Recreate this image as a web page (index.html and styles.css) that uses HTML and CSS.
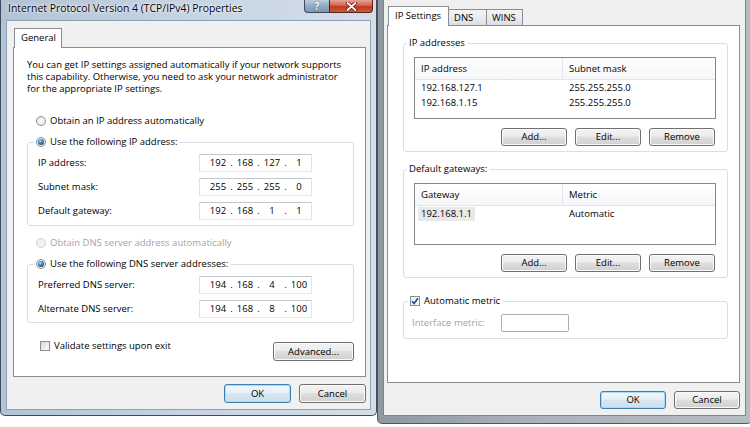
FILE: index.html
```html
<!DOCTYPE html>
<html>
<head>
<meta charset="utf-8">
<title>TCP/IPv4 Properties</title>
<link rel="stylesheet" href="styles.css">
</head>
<body>
<div class="win win-left">
  <div class="titlebar">
    <span class="title">Internet Protocol Version 4 (TCP/IPv4) Properties</span>
    <div class="caps">
      <span class="cap cap-help">?</span>
      <span class="cap cap-close"><svg width="13" height="9" viewBox="0 0 13 9"><path d="M2.5 1 L10.5 8 M10.5 1 L2.5 8" stroke="#5a1a10" stroke-width="3.4" stroke-linecap="round"/><path d="M2.5 1 L10.5 8 M10.5 1 L2.5 8" stroke="#fff" stroke-width="1.8" stroke-linecap="round"/></svg></span>
    </div>
  </div>
  <div class="client client-left">
    <div class="tabs">
      <span class="tab active tab-general">General</span>
    </div>
    <div class="panel panel-left">
      <p class="intro">You can get IP settings assigned automatically if your network supports<br>this capability. Otherwise, you need to ask your network administrator<br>for the appropriate IP settings.</p>
      <div class="opt opt-ip"><span class="radio"></span><span>Obtain an IP address automatically</span></div>
      <fieldset class="group group-l group-ip">
        <legend><span class="leg"><span class="radio checked"></span><span>Use the following IP address:</span></span></legend>
        <div class="field"><span>IP address:</span><span class="ipbox"><span class="seg">192</span><span class="dot">.</span><span class="seg">168</span><span class="dot">.</span><span class="seg">127</span><span class="dot">.</span><span class="seg">1</span></span></div>
        <div class="field"><span>Subnet mask:</span><span class="ipbox"><span class="seg">255</span><span class="dot">.</span><span class="seg">255</span><span class="dot">.</span><span class="seg">255</span><span class="dot">.</span><span class="seg">0</span></span></div>
        <div class="field"><span>Default gateway:</span><span class="ipbox"><span class="seg">192</span><span class="dot">.</span><span class="seg">168</span><span class="dot">.</span><span class="seg">1</span><span class="dot">.</span><span class="seg">1</span></span></div>
      </fieldset>
      <div class="opt opt-dns disabled"><span class="radio off"></span><span>Obtain DNS server address automatically</span></div>
      <fieldset class="group group-l group-dns">
        <legend><span class="leg"><span class="radio checked"></span><span>Use the following DNS server addresses:</span></span></legend>
        <div class="field"><span>Preferred DNS server:</span><span class="ipbox"><span class="seg">194</span><span class="dot">.</span><span class="seg">168</span><span class="dot">.</span><span class="seg">4</span><span class="dot">.</span><span class="seg">100</span></span></div>
        <div class="field"><span>Alternate DNS server:</span><span class="ipbox"><span class="seg">194</span><span class="dot">.</span><span class="seg">168</span><span class="dot">.</span><span class="seg">8</span><span class="dot">.</span><span class="seg">100</span></span></div>
      </fieldset>
      <div class="validate-row">
        <span class="chk"><span class="checkbox"></span><span>Validate settings upon exit</span></span>
        <button class="btn btn-adv">Advanced...</button>
      </div>
    </div>
    <div class="footer footer-left">
      <button class="btn btn-foot btn-default">OK</button>
      <button class="btn btn-foot">Cancel</button>
    </div>
  </div>
</div>

<div class="win win-right">
  <div class="client client-right">
    <div class="tabs">
      <span class="tab active tab-ip">IP Settings</span>
      <span class="tab tab-dns">DNS</span>
      <span class="tab tab-wins">WINS</span>
    </div>
    <div class="panel panel-right">
      <fieldset class="group group-r group-addr">
        <legend>IP addresses</legend>
        <div class="list">
          <div class="list-head"><span class="col1">IP address</span><span class="col2">Subnet mask</span></div>
          <div class="list-row"><span class="col1">192.168.127.1</span><span class="col2">255.255.255.0</span></div>
          <div class="list-row"><span class="col1">192.168.1.15</span><span class="col2">255.255.255.0</span></div>
        </div>
        <div class="btn-row">
          <button class="btn btn-list">Add...</button>
          <button class="btn btn-list">Edit...</button>
          <button class="btn btn-list">Remove</button>
        </div>
      </fieldset>
      <fieldset class="group group-r group-gw">
        <legend>Default gateways:</legend>
        <div class="list">
          <div class="list-head"><span class="col1">Gateway</span><span class="col2">Metric</span></div>
          <div class="list-row"><span class="col1"><span class="sel">192.168.1.1</span></span><span class="col2">Automatic</span></div>
        </div>
        <div class="btn-row">
          <button class="btn btn-list">Add...</button>
          <button class="btn btn-list">Edit...</button>
          <button class="btn btn-list">Remove</button>
        </div>
      </fieldset>
      <fieldset class="group group-r group-metric">
        <legend><span class="leg"><span class="checkbox checked"><svg width="8" height="8" viewBox="0 0 8 8"><path d="M1 4.2 L3.1 6.5 L7 1.2" fill="none" stroke="#1c4f8a" stroke-width="1.6"/></svg></span><span>Automatic metric</span></span></legend>
        <div class="metric-row"><span class="disabled">Interface metric:</span><span class="textbox"></span></div>
      </fieldset>
    </div>
    <div class="footer footer-right">
      <button class="btn btn-foot2 btn-default">OK</button>
      <button class="btn btn-foot2">Cancel</button>
    </div>
  </div>
</div>
</body>
</html>
```

FILE: styles.css
```css
* { box-sizing: border-box; }
html, body { margin: 0; padding: 0; }
body {
  width: 750px;
  height: 427px;
  overflow: hidden;
  background: #fff;
  display: flex;
  align-items: flex-start;
  font-family: "Open Sans", "Noto Sans", sans-serif;
  font-size: 9.5px;
  line-height: 12px;
  color: #000;
}

/* windows */
.win { display: flex; flex-direction: column; flex: none; }
.win-left {
  width: 377px;
  height: 416px;
  padding: 0 5px 5px;
  border: 1px solid #3d4c5c;
  border-top: none;
  border-radius: 0 0 5px 5px;
  background: linear-gradient(90deg, #b2c3d5 0%, #c6d4e2 50%, #d3dee9 100%);
}
.win-right {
  width: 375px;
  height: 424px;
  padding: 0 5px 7px;
  border: 1px solid #4f5762;
  border-top: none;
  border-radius: 0 0 5px 5px;
  background: linear-gradient(90deg, #8f989f 0%, #aab1b8 40%, #b5bcc2 100%);
}

.titlebar { height: 20px; display: flex; align-items: flex-start; }
.title {
  margin: 2px 0 0 2px;
  font-size: 10.4px;
  line-height: 12px;
  color: #000;
  text-shadow: 0 0 4px #fff, 0 0 2px #fff;
}
.caps { margin-left: auto; margin-right: -2px; display: flex; height: 13px; }
.cap {
  display: flex;
  align-items: center;
  justify-content: center;
  height: 13px;
  border: 1px solid #3b4b5d;
  border-top: none;
}
.cap-help {
  width: 25px;
  border-right: none;
  border-radius: 0 0 0 4px;
  background: linear-gradient(#bccde0, #93aac3 50%, #7d95b0);
  color: #fff;
  font-weight: 700;
  font-size: 10px;
  text-shadow: 0 0 2px #3b4b5d;
}
.cap-close {
  width: 44px;
  border-color: #5b2017;
  border-radius: 0 0 4px 0;
  background: linear-gradient(#e6a597, #d3634c 45%, #bd3a22 55%, #cc5a40);
}

.client {
  flex: 1;
  display: flex;
  flex-direction: column;
  background: #f0f0f0;
  border: 1px solid #8ea2b7;
}
.client-left { padding: 7px 4px 0 6px; }
.client-right { border-top: none; border-color: #7d858d; padding: 6px 5px 0 3px; }

/* tabs */
.tabs { display: flex; align-items: flex-end; padding-left: 1px; }
.tab {
  height: 16px;
  padding: 0 5px;
  border: 1px solid #898c95;
  border-bottom: none;
  background: linear-gradient(#f4f4f4, #ebebeb 50%, #dddddd);
  display: flex;
  align-items: center;
  margin-right: -1px;
}
.tab.active {
  position: relative;
  z-index: 1;
  height: 20px;
  margin-bottom: -1px;
  background: #fff;
  padding-bottom: 2px;
}
.tab-general { width: 48px; height: 19px; padding-left: 6px; }
.tab-ip { width: 61px; padding-left: 6px; }
.tab-dns { width: 39px; }
.tab-wins { width: 37px; }

.panel { flex: none; background: #fff; border: 1px solid #898c95; }
.panel-left { height: 330px; padding: 11px 11px 0 13px; }
.panel-right { height: 358px; padding: 11px 11px 0 15px; }

.intro { margin: 0; }

.opt { display: flex; align-items: center; gap: 4px; padding-left: 9px; height: 12px; }
.opt-ip { margin-top: 20px; }
.opt-dns { margin-top: 11px; }
.disabled { color: #a3a3a3; }

/* group boxes */
.group {
  margin: 0;
  min-width: 0;
  border: 1px solid #d5dfe5;
  border-radius: 3px;
}
.group legend { padding: 0 3px 0 2px; line-height: 12px; }
.leg { display: flex; align-items: center; gap: 4px; }
.group-l { padding: 6px 0 5px 10px; }
.group-l legend { margin-left: -4px; }
.group-ip { margin-top: 9px; }
.group-dns { margin-top: 9px; padding-bottom: 4px; }

.field {
  display: grid;
  grid-template-columns: 161px 113px;
  align-items: center;
  height: 18px;
}
.field + .field { margin-top: 6px; }

.ipbox {
  height: 18px;
  display: flex;
  align-items: center;
  padding-left: 8px;
  background: #fff;
  border: 1px solid;
  border-color: #c4c7cc #e0e2e8 #e4e8ee #e0e2e8;
}
.seg { width: 20px; text-align: center; }
.dot { width: 7px; text-align: center; }

/* radios & checkboxes */
.radio {
  flex: none;
  width: 10px;
  height: 10px;
  border-radius: 50%;
  border: 1px solid #8c8e90;
  background: radial-gradient(circle at 50% 50%, #fdfdfd 0%, #e3e3e3 100%);
  display: flex;
  align-items: center;
  justify-content: center;
}
.radio.checked::after {
  content: "";
  width: 6px;
  height: 6px;
  border-radius: 50%;
  background: radial-gradient(circle at 40% 35%, #a6e0fa 0%, #2d78b8 45%, #0f3256 100%);
}
.radio.off { border-color: #cfcfcf; background: #f2f2f2; }

.checkbox {
  flex: none;
  width: 10px;
  height: 10px;
  border: 1px solid #8e8f8f;
  background: linear-gradient(135deg, #d8d8d8, #fbfbfb);
  display: flex;
  align-items: center;
  justify-content: center;
}
.checkbox.checked { background: linear-gradient(135deg, #e2e9f0, #fdfdfd); }

.validate-row {
  display: flex;
  align-items: flex-start;
  justify-content: space-between;
  margin-top: 17px;
}
.chk { display: flex; align-items: center; gap: 4px; padding-left: 13px; height: 12px; }

/* buttons */
.btn {
  font: inherit;
  color: #000;
  height: 19px;
  padding: 0;
  border: 1px solid #707070;
  border-radius: 3px;
  background: linear-gradient(#f3f3f3 0%, #ececec 45%, #dedede 50%, #d0d0d0 100%);
  box-shadow: inset 0 0 0 1px #fbfbfb;
  display: flex;
  align-items: center;
  justify-content: center;
}
.btn-default {
  border-color: #3c7fb1;
  box-shadow: inset 0 0 0 1px #a6dcf4;
  background: linear-gradient(#f0f7fc 0%, #e5f0f8 45%, #d8e7f2 50%, #cddfec 100%);
}
.btn-adv { width: 81px; margin-top: 2px; }
.btn-foot { width: 67px; }
.btn-foot2 { width: 66px; height: 18px; }
.btn-list { width: 66px; height: 18px; }

.footer { display: flex; justify-content: flex-end; gap: 8px; }
.footer-left { margin-top: 7px; }
.footer-right { margin-top: 8px; }

/* right dialog */
.group-r { padding: 8px 12px 5px 10px; }
.group-r legend { margin-left: -7px; }
.group-gw { margin-top: 11px; }
.group-metric { margin-top: 17px; padding: 7px 12px 6px 8px; }
.group-metric legend { margin-left: -4px; }

.list {
  height: 62px;
  border: 1px solid #828790;
  background: #fff;
  margin-right: -1px;
}
.list-head {
  display: flex;
  height: 22px;
  border-bottom: 1px solid #e2e5ea;
  background: linear-gradient(#ffffff, #f5f6f8);
}
.list-head .col1 { border-right: 1px solid #e3e5e8; }
.list-row { display: flex; height: 15px; }
.col1 { width: 148px; padding-left: 6px; display: flex; align-items: center; }
.col2 { flex: 1; padding-left: 6px; display: flex; align-items: center; }
.sel { background: #e9e9e9; padding: 1px 3px; margin-left: -3px; }

.btn-row { display: flex; justify-content: flex-end; gap: 8px; margin-top: 9px; }

.metric-row { display: grid; grid-template-columns: 89px 68px; align-items: center; height: 18px; }
.textbox {
  height: 18px;
  border: 1px solid #abadb3;
  border-radius: 2px;
  background: #fff;
}
```
